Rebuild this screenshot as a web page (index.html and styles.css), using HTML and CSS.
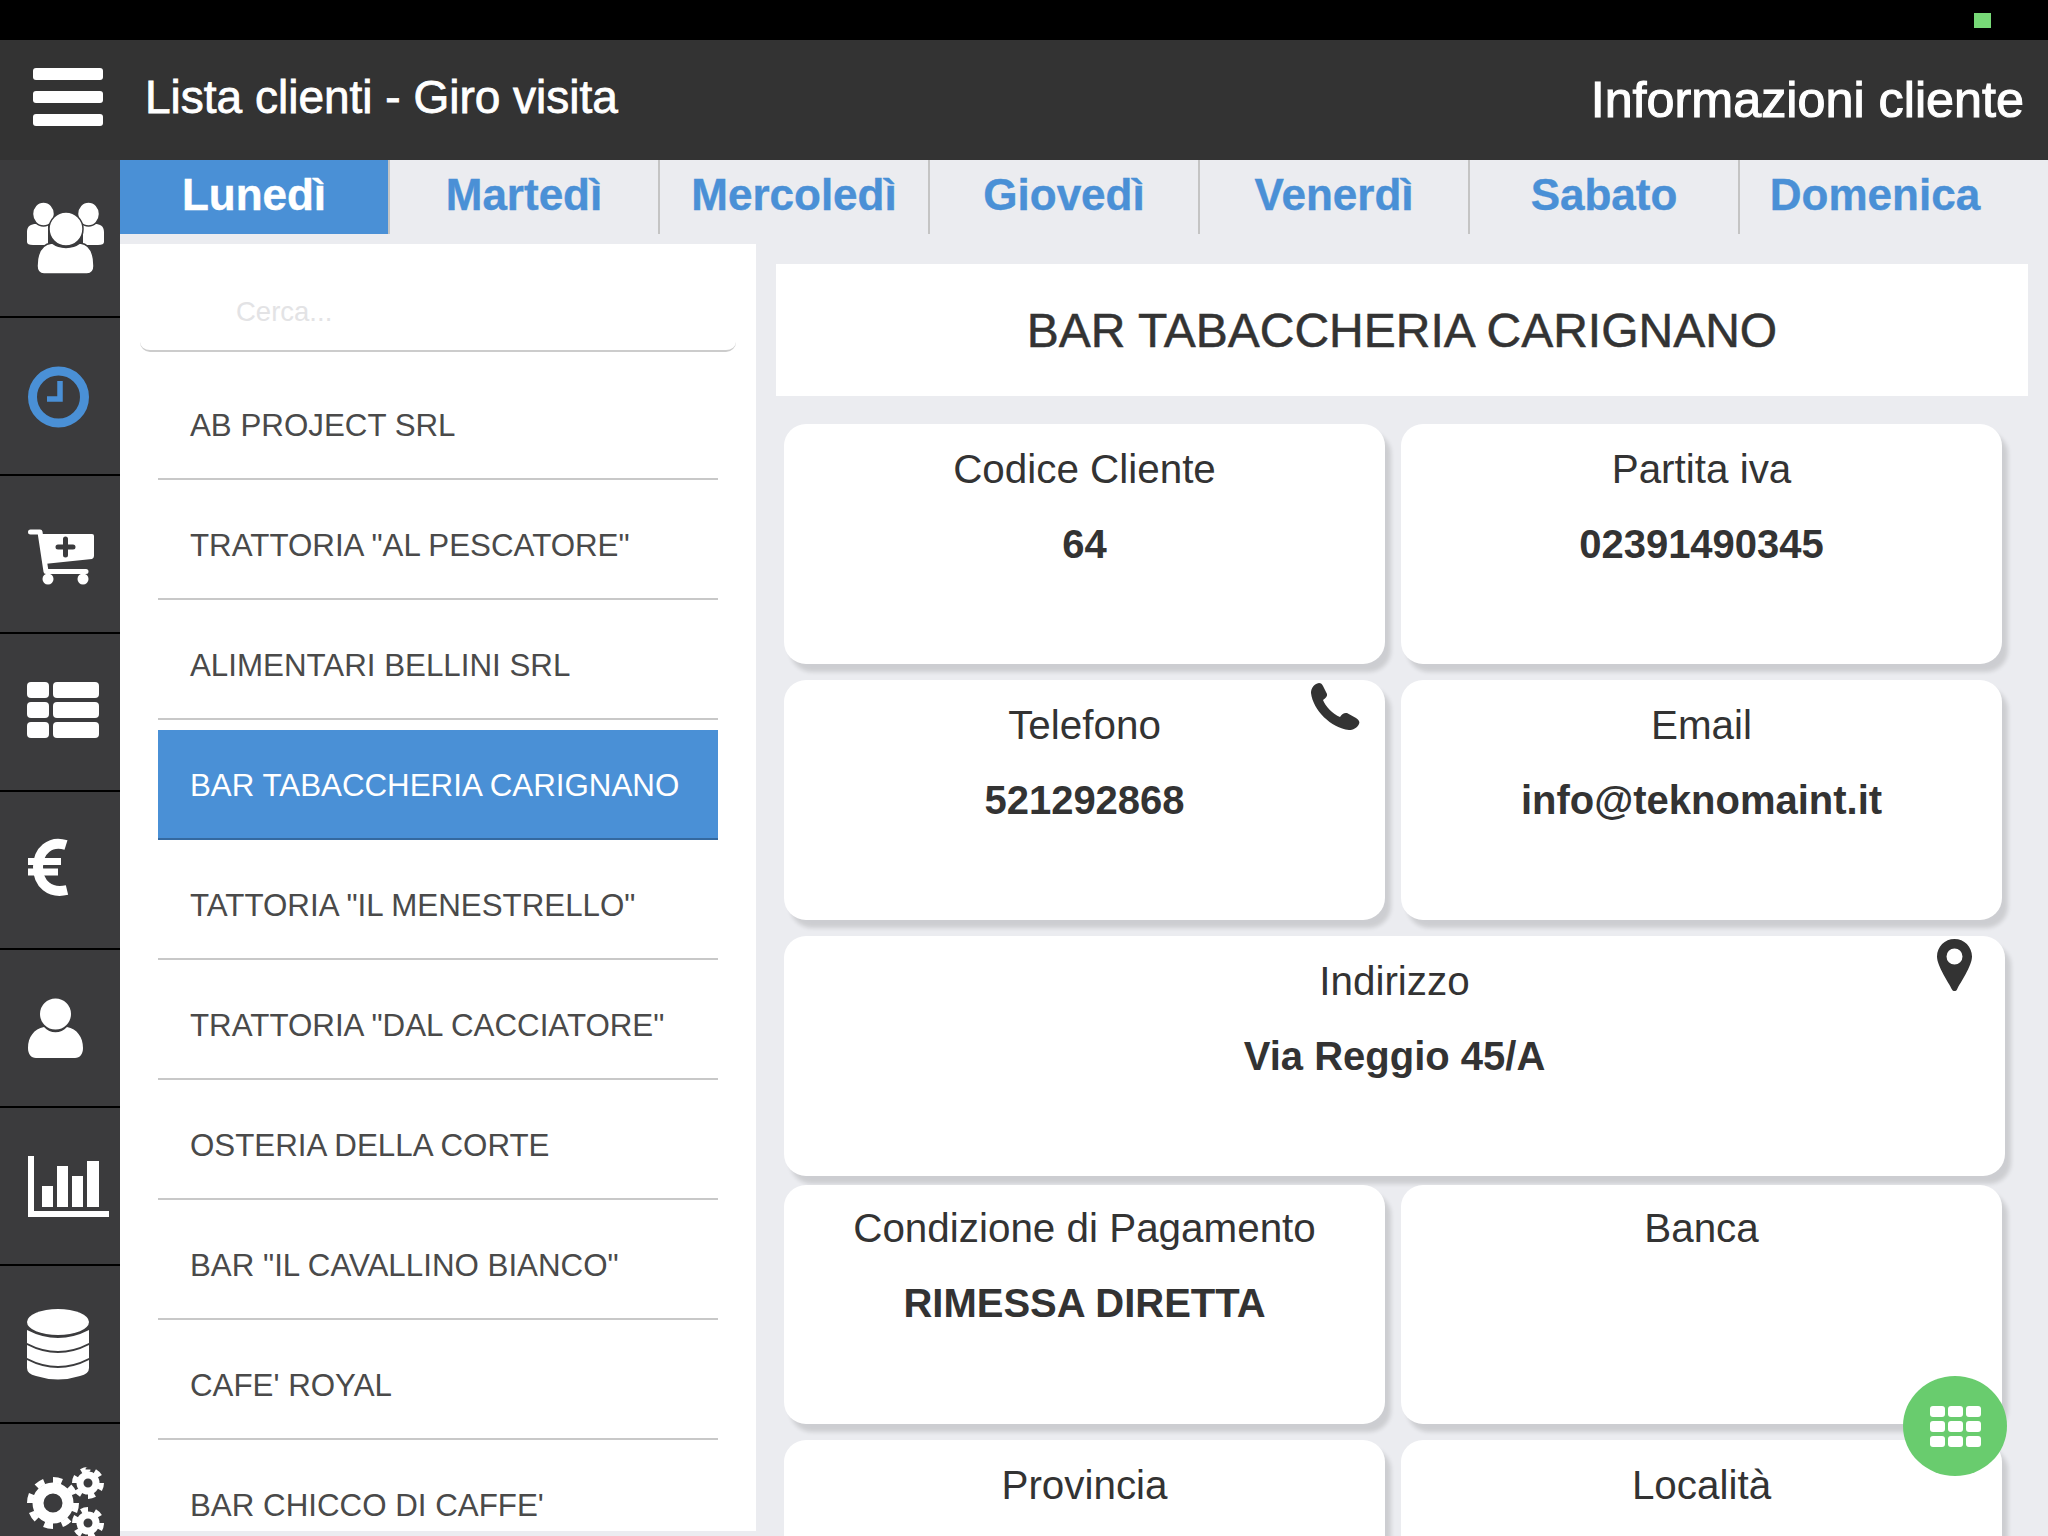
FILE: index.html
```html
<!DOCTYPE html>
<html lang="it">
<head>
<meta charset="utf-8">
<title>Lista clienti - Giro visita</title>
<link rel="stylesheet" href="styles.css">
</head>
<body>
<div class="status"><span class="battery"></span></div>
<header class="topbar">
  <div class="burger"><span></span><span></span><span></span></div>
  <h1 class="topbar-title">Lista clienti - Giro visita</h1>
  <h2 class="topbar-info">Informazioni cliente</h2>
</header>
<div class="layout">
  <nav class="rail">
    <a class="rail-item"><svg viewBox="0 0 120 156" class="rail-icon"><g fill="#fff"><path d="M27 82V72c0-6 4-8 9-8h12v21H33c-4 0-6-1-6-3zM104 82V72c0-6-4-8-9-8H83v21h15c4 0 6-1 6-3z"/><ellipse cx="43.500" cy="54" rx="11" ry="12" stroke="#3b3b3d" stroke-width="1.500"/><ellipse cx="88.500" cy="54" rx="11" ry="12" stroke="#3b3b3d" stroke-width="1.500"/><path d="M37 106c0-15 6-22 15-23 8 6 20 6 28 0 9 1 14 8 14 23 0 5-3 8-7 8H44c-4 0-7-3-7-8z" stroke="#3b3b3d" stroke-width="1.500"/><ellipse cx="66" cy="69" rx="17" ry="17" stroke="#3b3b3d" stroke-width="1.500"/></g></svg></a>
    <a class="rail-item"><svg viewBox="0 0 120 156" class="rail-icon"><ellipse cx="58.500" cy="79" rx="26" ry="26" fill="none" stroke="#4a90d6" stroke-width="9"/><path d="M60 63V81H47" fill="none" stroke="#4a90d6" stroke-width="5.500"/></svg></a>
    <a class="rail-item"><svg viewBox="0 0 120 156" class="rail-icon"><path d="M30.500 56H40L46 95.500H86" fill="none" stroke="#fff" stroke-width="5" stroke-linecap="round" stroke-linejoin="round"/><path d="M39 58H92Q94 58 94 60V80Q94 82 92 83L44 88Z" fill="#fff"/><path d="M58 71H73M65.500 63V79" stroke="#3b3b3d" stroke-width="5" stroke-linecap="round"/><circle cx="48" cy="103" r="5.500" fill="#fff"/><circle cx="83" cy="103" r="5.500" fill="#fff"/></svg></a>
    <a class="rail-item"><svg viewBox="0 0 120 156" class="rail-icon"><g fill="#fff"><rect x="27" y="48" width="22" height="16" rx="4"/><rect x="53" y="48" width="46" height="16" rx="4"/><rect x="27" y="68" width="22" height="16" rx="4"/><rect x="53" y="68" width="46" height="16" rx="4"/><rect x="27" y="88" width="22" height="16" rx="4"/><rect x="53" y="88" width="46" height="16" rx="4"/></g></svg></a>
    <a class="rail-item"><svg viewBox="0 0 120 156" class="rail-icon"><path d="M66 53C50 48 38 59 38 75C38 92 50 102 67 98" fill="none" stroke="#fff" stroke-width="10"/><path d="M28 69.500H61M28 80H58" stroke="#fff" stroke-width="7"/></svg></a>
    <a class="rail-item"><svg viewBox="0 0 120 156" class="rail-icon"><g fill="#fff"><path d="M28 98C28 87 34 79 44 77C50 84 61 84 67 77C77 79 83 87 83 98C83 104 80 108 75 108H36C31 108 28 104 28 98Z"/><circle cx="55.500" cy="64" r="15.500"/></g></svg></a>
    <a class="rail-item"><svg viewBox="0 0 120 156" class="rail-icon"><g fill="#fff"><path d="M28 48H34V103H109V109H28Z"/><rect x="42" y="78" width="11" height="21"/><rect x="57" y="58" width="11" height="41"/><rect x="72" y="68" width="11" height="31"/><rect x="87" y="53" width="12" height="46"/></g></svg></a>
    <a class="rail-item"><svg viewBox="0 0 120 156" class="rail-icon"><g fill="#fff"><ellipse cx="58" cy="56" rx="31" ry="13"/><path d="M27 64Q58 80 89 64V77Q58 93 27 77Z"/><path d="M27 79Q58 95 89 79V92Q58 108 27 92Z"/><path d="M27 94Q58 110 89 94V102Q89 108 80 110Q58 117 36 110Q27 108 27 102Z"/></g></svg></a>
    <a class="rail-item"><svg viewBox="0 0 120 156" class="rail-icon"><g fill="none" stroke="#fff"><circle cx="53" cy="79" r="15" stroke-width="11"/><circle cx="53" cy="79" r="23" stroke-width="6" pathLength="16" stroke-dasharray="1 1"/><circle cx="88" cy="59" r="8" stroke-width="7"/><circle cx="88" cy="59" r="13.500" stroke-width="5" pathLength="12" stroke-dasharray="1 1"/><circle cx="88" cy="99" r="8" stroke-width="7"/><circle cx="88" cy="99" r="13.500" stroke-width="5" pathLength="12" stroke-dasharray="1 1"/></g></svg></a>
  </nav>
  <main class="main">
    <div class="tabs">
      <a class="tab tab--active">Lunedì</a>
      <a class="tab">Martedì</a>
      <a class="tab">Mercoledì</a>
      <a class="tab">Giovedì</a>
      <a class="tab">Venerdì</a>
      <a class="tab">Sabato</a>
      <a class="tab tab--last">Domenica</a>
    </div>
    <div class="content">
      <aside class="clients">
        <div class="search"><input class="search-input" type="text" placeholder="Cerca..."></div>
        <ul class="client-list">
          <li class="client">AB PROJECT SRL</li>
          <li class="client">TRATTORIA "AL PESCATORE"</li>
          <li class="client">ALIMENTARI BELLINI SRL</li>
          <li class="client client--active"><span class="client-pill">BAR TABACCHERIA CARIGNANO</span></li>
          <li class="client">TATTORIA "IL MENESTRELLO"</li>
          <li class="client">TRATTORIA "DAL CACCIATORE"</li>
          <li class="client">OSTERIA DELLA CORTE</li>
          <li class="client">BAR "IL CAVALLINO BIANCO"</li>
          <li class="client">CAFE' ROYAL</li>
          <li class="client">BAR CHICCO DI CAFFE'</li>
        </ul>
      </aside>
      <section class="detail">
        <div class="detail-title">BAR TABACCHERIA CARIGNANO</div>
        <div class="cards">
          <div class="card-row">
            <div class="card"><div class="card-label">Codice Cliente</div><div class="card-value">64</div></div>
            <div class="card"><div class="card-label">Partita iva</div><div class="card-value">02391490345</div></div>
          </div>
          <div class="card-row">
            <div class="card"><div class="card-label">Telefono</div><div class="card-value">521292868</div>
              <svg class="phone" viewBox="0 0 49 47"><path fill="#333" d="M8 0C10 0 11 1 12 3L16 11C16.500 13 15 15 12 17C14 23 22 31 29 34C31 31 33 29.500 36 30L45 35C48 37 49 39 48 41C46 45 42 47 38 47C20 45 2 27 0 10C0 5 3 1 8 0Z"/></svg>
            </div>
            <div class="card"><div class="card-label">Email</div><div class="card-value">info@teknomaint.it</div></div>
          </div>
          <div class="card-row card-row--tight">
            <div class="card card--wide"><div class="card-label">Indirizzo</div><div class="card-value">Via Reggio 45/A</div>
              <svg class="pin" viewBox="0 0 35 52"><path fill="#333" fill-rule="evenodd" d="M17.500 0C7.800 0 0 7.800 0 17.500C0 27 12 44 15 50.500C16 52.500 19 52.500 20 50.500C23 44 35 27 35 17.500C35 7.800 27.200 0 17.500 0ZM17.500 9.500a8 8 0 1 1 0 16a8 8 0 1 1 0-16Z"/></svg>
            </div>
          </div>
          <div class="card-row">
            <div class="card card--low"><div class="card-label">Condizione di Pagamento</div><div class="card-value">RIMESSA DIRETTA</div></div>
            <div class="card card--low"><div class="card-label">Banca</div><div class="card-value"></div></div>
          </div>
          <div class="card-row">
            <div class="card"><div class="card-label">Provincia</div></div>
            <div class="card"><div class="card-label">Località</div></div>
          </div>
        </div>
      </section>
    </div>
  </main>
</div>
<button class="fab" type="button" aria-label="Menu">
  <span class="fab-grid"><i></i><i></i><i></i><i></i><i></i><i></i><i></i><i></i><i></i></span>
</button>
</body>
</html>
```
FILE: styles.css
```css
* { box-sizing: border-box; }
html, body { margin: 0; height: 1536px; overflow: hidden; }
body { position: relative; background: #ebecf0; font-family: "Liberation Sans", Arial, sans-serif; color: #333; }
.status { height: 40px; background: #000; display: flex; justify-content: flex-end; align-items: flex-start; padding: 13px 57px 0 0; }
.battery { width: 17px; height: 15px; background: #77d977; }
.topbar { height: 120px; background: #333; color: #fff; display: flex; align-items: center; padding: 0 24px 0 33px; }
.burger { width: 70px; display: flex; flex-direction: column; gap: 11px; margin-top: -6px; }
.burger span { height: 12px; background: #fff; border-radius: 3px; }
.topbar-title { margin: -6px 0 0 42px; font-size: 46px; font-weight: 400; -webkit-text-stroke: 0.8px #fff; flex: 1; }
.topbar-info { margin: -2px 0 0; font-size: 50.300px; font-weight: 400; -webkit-text-stroke: 1.100px #fff; }
.layout { display: flex; height: 1376px; overflow: hidden; }
.rail { width: 120px; flex: none; background: #3b3b3d; }
.rail-item { display: block; height: 158px; border-bottom: 2px solid #000; }
.rail-icon { display: block; width: 120px; height: 156px; }
.main { flex: 1; min-width: 0; }
.tabs { display: flex; height: 74px; }
.tab { width: 270px; flex: none; display: flex; justify-content: center; align-items: center; padding-bottom: 4px; font-size: 44px; font-weight: 700; -webkit-text-stroke: 0.4px currentColor; color: #4a90d6; border-right: 2px solid #c4c4c4; }
.tab--active { background: #4a90d6; color: #fff; }
.tab--last { border-right: 0; }
.content { display: flex; margin-top: 10px; align-items: flex-start; }
.clients { width: 636px; flex: none; height: 1287px; background: #fff; padding: 0 20px; overflow: hidden; }
.search { height: 108px; border-bottom: 2px solid #ccc; border-radius: 0 0 10px 10px; padding: 52px 0 0 96px; }
.search-input { border: 0; outline: 0; width: 400px; padding: 0; font: 27.500px "Liberation Sans", Arial, sans-serif; color: #333; background: transparent; }
.search-input::placeholder { color: #e3e3e5; opacity: 1; }
.client-list { list-style: none; margin: 8px 0 0; padding: 0 18px; }
.client { height: 120px; padding: 48px 0 0 32px; font-size: 31.300px; line-height: 36px; color: #4a4a4a; border-bottom: 2px solid #c8c8c8; white-space: nowrap; }
.client--active { padding: 10px 0 0; border-bottom: 0; }
.client-pill { display: block; height: 110px; padding: 38px 0 0 32px; background: #4a90d6; color: #fff; border-bottom: 2px solid #35699f; }
.detail { flex: 1; min-width: 0; padding: 20px 20px 0; }
.detail-title { height: 132px; background: #fff; display: flex; justify-content: center; align-items: center; font-size: 48px; -webkit-text-stroke: 0.5px #333; }
.cards { margin: 28px 0 0 8px; }
.card-row { display: flex; gap: 16px; margin-bottom: 16px; }
.card-row--tight { margin-bottom: 9px; }
.card { position: relative; width: 601px; height: 240px; background: #fff; border-radius: 22px; box-shadow: 6px 8px 4px rgba(0, 0, 0, .13); text-align: center; padding-top: 21px; }
.card--wide { width: 1221px; }
.card--low { height: 239px; padding-top: 19px; }
.card-label { font-size: 40.400px; line-height: 48px; }
.card-value { margin-top: 27px; font-size: 40px; line-height: 48px; font-weight: 700; min-height: 48px; }
.phone { position: absolute; left: 527px; top: 3px; width: 49px; height: 47px; }
.pin { position: absolute; right: 33px; top: 3px; width: 35px; height: 52px; }
.fab { position: absolute; left: 1903px; top: 1376px; width: 104px; height: 100px; border: 0; padding: 0; border-radius: 50%; background: #69cc6e; display: flex; justify-content: center; align-items: center; }
.fab-grid { display: grid; grid-template-columns: repeat(3, 15px); grid-auto-rows: 11px; gap: 4px 3px; }
.fab-grid i { background: #fff; border-radius: 3px; }
```
